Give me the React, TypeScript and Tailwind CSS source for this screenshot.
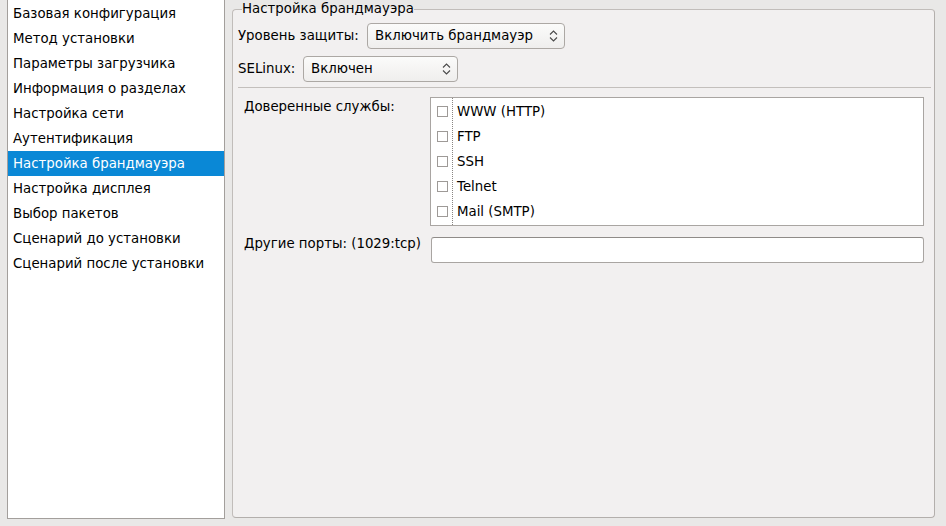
import React from "react";

const items = [
  "Базовая конфигурация",
  "Метод установки",
  "Параметры загрузчика",
  "Информация о разделах",
  "Настройка сети",
  "Аутентификация",
  "Настройка брандмауэра",
  "Настройка дисплея",
  "Выбор пакетов",
  "Сценарий до установки",
  "Сценарий после установки",
];

const services = ["WWW (HTTP)", "FTP", "SSH", "Telnet", "Mail (SMTP)"];

function Arrows() {
  return (
    <svg width="9" height="14" viewBox="0 0 9 14" fill="none" stroke="#4a4a4a" strokeWidth="1.1">
      <path d="M1 5.5 L4.5 2 L8 5.5" />
      <path d="M1 8.5 L4.5 12 L8 8.5" />
    </svg>
  );
}

function Combo({ text, width }: { text: string; width: string }) {
  return (
    <div
      className={`${width} h-[26px] flex items-center justify-between pl-[7px] pr-[6px] rounded-[4px] border border-[#aca8a4] bg-gradient-to-b from-[#fbfbfa] to-[#efeeed]`}
    >
      <span>{text}</span>
      <Arrows />
    </div>
  );
}

export default function App() {
  return (
    <div className="w-[946px] h-[526px] bg-[#e9e8e7] flex items-start pl-[7px] gap-[7px] font-['DejaVu_Sans',sans-serif] text-[13.33px] leading-[16px] text-black overflow-hidden">
      <div className="w-[218px] h-[519px] bg-white border-l border-r border-b border-[#a39f9c] flex flex-col pt-[1px]">
        {items.map((it, i) => (
          <div
            key={it}
            className={
              i === 6
                ? "h-[25px] flex items-center pl-[5px] bg-[#0a88d6] text-white"
                : "h-[25px] flex items-center pl-[5px]"
            }
          >
            {it}
          </div>
        ))}
      </div>

      <fieldset className="mt-[1px] w-[703px] h-[517px] border border-[#c1bdba] border-r-[#b3afac] border-b-[#b3afac] rounded-[4px] bg-[#f2f0f0] pl-[5px] pr-[3px] min-w-0">
        <legend className="ml-[4px] px-0">Настройка брандмауэра</legend>
        <div className="flex flex-col pt-[6px]">
          <div className="flex items-center">
            <div className="w-[129px]">Уровень защиты:</div>
            <Combo text="Включить брандмауэр" width="w-[198px]" />
          </div>
          <div className="flex items-center mt-[7px]">
            <div className="w-[65px]">SELinux:</div>
            <Combo text="Включен" width="w-[155px]" />
          </div>
          <div className="mt-[5px] h-px bg-[#c3bfbc]" />

          <div className="flex items-start mt-[9px] pl-[6px]">
            <div className="w-[186px] mt-[2px]">Доверенные службы:</div>
            <div className="w-[494px] h-[129px] bg-white border border-[#a9a5a2] flex">
              <div className="w-[21px] flex flex-col pt-[1px]">
                {services.map((s) => (
                  <div key={s} className="h-[25px] flex items-center pl-[6px]">
                    <div className="w-[11px] h-[11px] border border-[#9e9a97] bg-white" />
                  </div>
                ))}
              </div>
              <div className="flex-1 border-l border-dotted border-[#8a8683] flex flex-col pt-[1px]">
                {services.map((s) => (
                  <div key={s} className="h-[25px] flex items-center pl-[4px]">
                    {s}
                  </div>
                ))}
              </div>
            </div>
          </div>

          <div className="flex items-start mt-[11px] pl-[6px]">
            <div className="w-[187px] mt-[-1px]">Другие порты: (1029:tcp)</div>
            <div className="w-[493px] h-[26px] bg-white border border-[#a9a5a2] border-t-[#8f8b88] rounded-[3px]" />
          </div>
        </div>
      </fieldset>
    </div>
  );
}
